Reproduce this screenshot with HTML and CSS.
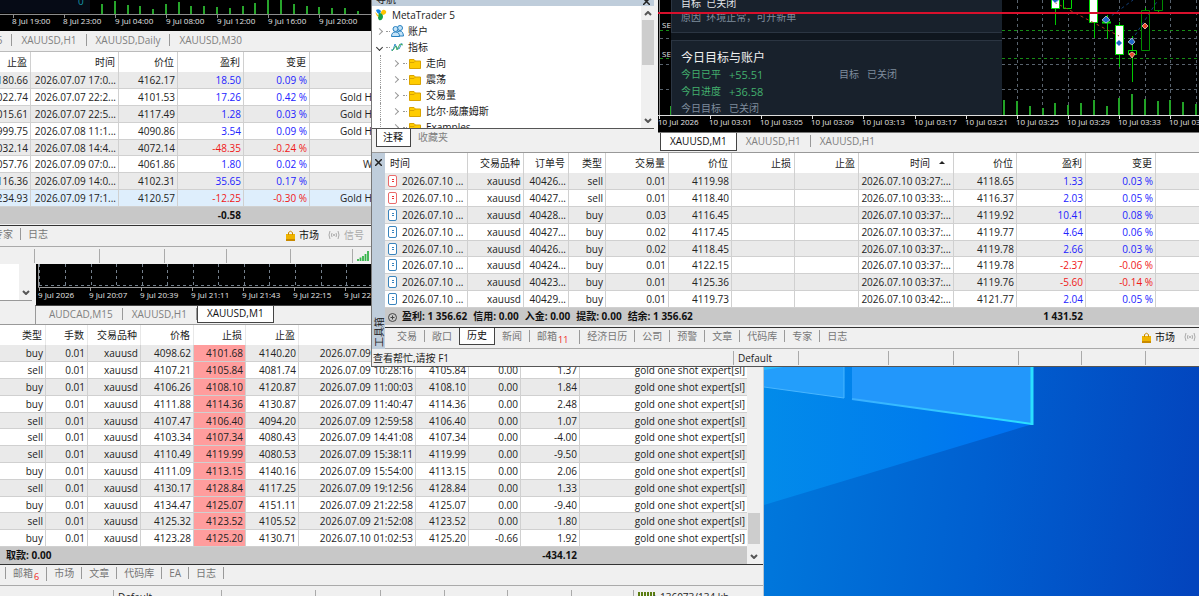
FILE: index.html
```html
<!DOCTYPE html>
<html lang="zh-CN">
<head>
<meta charset="utf-8">
<title>MetaTrader 5</title>
<link rel="stylesheet" href="styles.css">
</head>
<body>
<main class="desktop">
<svg class="wallpaper" viewBox="0 0 1199 596" preserveAspectRatio="xMaxYMax slice" aria-hidden="true">
  <defs>
    <linearGradient id="base" x1="764" y1="480" x2="1199" y2="530" gradientUnits="userSpaceOnUse"><stop offset="0" stop-color="#0078dc"/><stop offset=".5" stop-color="#005fd0"/><stop offset="1" stop-color="#0344bd"/></linearGradient>
    <linearGradient id="beam" x1="764" y1="0" x2="1033" y2="0" gradientUnits="userSpaceOnUse"><stop offset="0" stop-color="#028bea"/><stop offset=".6" stop-color="#007ced"/><stop offset="1" stop-color="#0070f4"/></linearGradient>
    <linearGradient id="edge" x1="852" y1="0" x2="1033" y2="0" gradientUnits="userSpaceOnUse"><stop offset="0" stop-color="#3aaeff"/><stop offset="1" stop-color="#2be0ff"/></linearGradient>
  </defs>
  <rect width="1199" height="596" fill="url(#base)"/>
  <path d="M700 300H1033V424L764 505L700 524Z" fill="url(#beam)"/>
  <path d="M700 360H844V398L764 387L700 378Z" fill="#239efb"/>
  <path d="M764 387L844 398V360" fill="none" stroke="#49b6ff" stroke-width="1"/>
  <path d="M764 366H790L764 370Z" fill="#2bbcfb"/>
  <path d="M852 360H1032V424L852 399Z" fill="#2297fb"/>
  <path d="M852 399L1032 424" fill="none" stroke="url(#edge)" stroke-width="2"/>
  <path d="M1032 360V425" stroke="#2be0ff" stroke-width="3"/>
</svg>

<section class="window win-history">
  <div class="chart-row">
    <div class="symbols"><div class="symbols-list"></div>
      <div class="sbar"><svg width="8" height="5" viewBox="0 0 8 5"><path d="M1 1L4 4L7 1" fill="none" stroke="#555" stroke-width="2"/></svg></div></div>
    <svg class="chart" height="41" viewBox="0 0 728 41" preserveAspectRatio="xMinYMin slice" role="img" aria-label="XAUUSD,M1">
      <rect width="728" height="42" fill="#000"/>
      <g stroke="#74808c" stroke-dasharray="3 3"><path d="M3.500 0V22M29.500 0V22M55.500 0V22M80.500 0V22M106.500 0V22M131.500 0V22M157.500 0V22M182.500 0V22M208.500 0V22M233.500 0V22M259.500 0V22M285.500 0V22M310.500 0V22M3 21.500H728"/></g>
      <path d="M2.500 0V23.500H728M3.500 23V27M54.500 23V27M105.500 23V27M156.500 23V27M207.500 23V27M258.500 23V27M309.500 23V27" fill="none" stroke="#999"/>
      <g class="axis"><text x="2" y="34">9 Jul 2026</text><text x="53" y="34">9 Jul 20:07</text><text x="104" y="34">9 Jul 20:39</text><text x="155" y="34">9 Jul 21:11</text><text x="206" y="34">9 Jul 21:43</text><text x="257" y="34">9 Jul 22:15</text><text x="308" y="34">9 Jul 22:47</text></g>
    </svg>
  </div>
  <nav class="tabs chart-tabs c-tabs"><button>AUDCAD,M15</button><button>XAUUSD,H1</button><button class="on">XAUUSD,M1</button></nav>
  <div class="table-row">
    <table class="grid deals">
      <colgroup><col class="w46"><col class="w42"><col class="w53"><col class="w53"><col class="w52"><col class="w53"><col class="w117"><col class="w53"><col class="w52"><col class="w59"><col></colgroup>
      <thead><tr><th>类型</th><th>手数</th><th>交易品种</th><th>价格</th><th>止损</th><th>止盈</th><th></th><th></th><th></th><th></th><th></th></tr></thead>
      <tbody>
      <tr><td>buy</td><td>0.01</td><td>xauusd</td><td>4098.62</td><td class="hit">4101.68</td><td>4140.20</td><td>2026.07.09 09:58:20</td><td></td><td></td><td></td><td></td></tr>
      <tr><td>sell</td><td>0.01</td><td>xauusd</td><td>4107.21</td><td class="hit">4105.84</td><td>4081.74</td><td>2026.07.09 10:28:16</td><td>4105.84</td><td>0.00</td><td>1.37</td><td>gold one shot expert[sl]</td></tr>
      <tr><td>buy</td><td>0.01</td><td>xauusd</td><td>4106.26</td><td class="hit">4108.10</td><td>4120.87</td><td>2026.07.09 11:00:03</td><td>4108.10</td><td>0.00</td><td>1.84</td><td>gold one shot expert[sl]</td></tr>
      <tr><td>buy</td><td>0.01</td><td>xauusd</td><td>4111.88</td><td class="hit">4114.36</td><td>4130.87</td><td>2026.07.09 11:40:47</td><td>4114.36</td><td>0.00</td><td>2.48</td><td>gold one shot expert[sl]</td></tr>
      <tr><td>sell</td><td>0.01</td><td>xauusd</td><td>4107.47</td><td class="hit">4106.40</td><td>4094.20</td><td>2026.07.09 12:59:58</td><td>4106.40</td><td>0.00</td><td>1.07</td><td>gold one shot expert[sl]</td></tr>
      <tr><td>sell</td><td>0.01</td><td>xauusd</td><td>4103.34</td><td class="hit">4107.34</td><td>4080.43</td><td>2026.07.09 14:41:08</td><td>4107.34</td><td>0.00</td><td>-4.00</td><td>gold one shot expert[sl]</td></tr>
      <tr><td>sell</td><td>0.01</td><td>xauusd</td><td>4110.49</td><td class="hit">4119.99</td><td>4080.53</td><td>2026.07.09 15:38:11</td><td>4119.99</td><td>0.00</td><td>-9.50</td><td>gold one shot expert[sl]</td></tr>
      <tr><td>buy</td><td>0.01</td><td>xauusd</td><td>4111.09</td><td class="hit">4113.15</td><td>4140.16</td><td>2026.07.09 15:54:00</td><td>4113.15</td><td>0.00</td><td>2.06</td><td>gold one shot expert[sl]</td></tr>
      <tr><td>sell</td><td>0.01</td><td>xauusd</td><td>4130.17</td><td class="hit">4128.84</td><td>4117.25</td><td>2026.07.09 19:12:56</td><td>4128.84</td><td>0.00</td><td>1.33</td><td>gold one shot expert[sl]</td></tr>
      <tr><td>buy</td><td>0.01</td><td>xauusd</td><td>4134.47</td><td class="hit">4125.07</td><td>4151.11</td><td>2026.07.09 21:22:58</td><td>4125.07</td><td>0.00</td><td>-9.40</td><td>gold one shot expert[sl]</td></tr>
      <tr><td>sell</td><td>0.01</td><td>xauusd</td><td>4125.32</td><td class="hit">4123.52</td><td>4105.52</td><td>2026.07.09 21:52:08</td><td>4123.52</td><td>0.00</td><td>1.80</td><td>gold one shot expert[sl]</td></tr>
      <tr><td>buy</td><td>0.01</td><td>xauusd</td><td>4123.28</td><td class="hit">4125.20</td><td>4130.71</td><td>2026.07.10 01:02:53</td><td>4125.20</td><td>-0.66</td><td>1.92</td><td>gold one shot expert[sl]</td></tr>
      </tbody>
      <tfoot><tr><td colspan="9" class="sum">取款: 0.00</td><td class="over">-434.12</td><td></td></tr></tfoot>
    </table>
    <div class="sbar long"><span class="thumb"></span><svg width="8" height="5" viewBox="0 0 8 5"><path d="M1 1L4 4L7 1" fill="none" stroke="#555" stroke-width="2"/></svg></div>
  </div>
  <nav class="tabs box-tabs first-sep"><button>邮箱<sub>6</sub></button><button>市场</button><button>文章</button><button>代码库</button><button>EA</button><button class="sep">日志</button></nav>
  <footer class="status c-status"><span></span><span>Default</span><span></span><span></span><span></span><span></span><span></span><span></span>
    <span class="mem"><svg width="18" height="10" viewBox="0 0 18 10"><path d="M1 0V10M4 0V10M7 0V10M10 0V10M13 0V10M16 0V10" stroke="#5b7d12" stroke-width="2"/><path d="M9 9L12 5L14 8L17 3" fill="none" stroke="#24445c" stroke-width="1"/></svg>136073/134 kb</span></footer>
</section>

<section class="window win-trade">
  <svg class="chart" height="31" viewBox="0 0 431 31" preserveAspectRatio="xMinYMin slice" role="img" aria-label="XAUUSD">
    <rect width="431" height="31" fill="#000"/>
    <rect width="150" height="13" fill="#060b16"/>
    <text x="138" y="5" class="zero">0</text>
    <path d="M162 14V4M175 14V1M188 14V5M200 14V6M213 14V9M226 14V4M239 14V2M251 14V6M264 14V6M277 14V7M290 14V8M303 14V6M315 14V3M328 14V0M341 14V0M354 14V4M367 14V6M379 14V7M392 14V8M405 14V8M418 14V11" stroke="#27a52b" stroke-width="2"/>
    <path d="M0 14.500H431M73.500 14V18M124.500 14V18M175.500 14V18M226.500 14V18M277.500 14V18M328.500 14V18M379.500 14V18" stroke="#8c8c8c"/>
    <g class="axis"><text x="72" y="24">8 Jul 19:00</text><text x="123" y="24">8 Jul 23:00</text><text x="175" y="24">9 Jul 04:00</text><text x="226" y="24">9 Jul 08:00</text><text x="277" y="24">9 Jul 12:00</text><text x="328" y="24">9 Jul 16:00</text><text x="379" y="24">9 Jul 20:00</text></g>
  </svg>
  <nav class="tabs chart-tabs a-tabs"><button>XAUUSD,M15</button><button>XAUUSD,H1</button><button>XAUUSD,Daily</button><button>XAUUSD,M30</button></nav>
  <table class="grid trades">
    <colgroup><col class="w91"><col class="w88"><col class="w59"><col class="w66"><col class="w66"><col></colgroup>
    <thead><tr><th>止盈</th><th>时间</th><th>价位</th><th>盈利</th><th>变更</th><th></th></tr></thead>
    <tbody>
    <tr><td>4180.66</td><td>2026.07.07 17:0...</td><td>4162.17</td><td class="up">18.50</td><td class="up">0.09 %</td><td class="note"></td></tr>
    <tr><td>4022.74</td><td>2026.07.07 22:2...</td><td>4101.53</td><td class="up">17.26</td><td class="up">0.42 %</td><td class="note">Gold H</td></tr>
    <tr><td>4015.61</td><td>2026.07.07 22:5...</td><td>4117.49</td><td class="up">1.28</td><td class="up">0.03 %</td><td class="note">Gold H</td></tr>
    <tr><td>3999.75</td><td>2026.07.08 11:1...</td><td>4090.86</td><td class="up">3.54</td><td class="up">0.09 %</td><td class="note">Gold H</td></tr>
    <tr><td>4032.14</td><td>2026.07.08 14:4...</td><td>4072.14</td><td class="down">-48.35</td><td class="down">-0.24 %</td><td class="note"></td></tr>
    <tr><td>4057.76</td><td>2026.07.09 07:0...</td><td>4061.86</td><td class="up">1.80</td><td class="up">0.02 %</td><td class="note late">W</td></tr>
    <tr><td>4116.36</td><td>2026.07.09 14:0...</td><td>4102.31</td><td class="up">35.65</td><td class="up">0.17 %</td><td class="note"></td></tr>
    <tr class="picked"><td>4234.93</td><td>2026.07.09 17:1...</td><td>4120.57</td><td class="down">-12.25</td><td class="down">-0.30 %</td><td class="note">Gold H</td></tr>
    </tbody>
    <tfoot><tr><td colspan="3"></td><td>-0.58</td><td colspan="2"></td></tr></tfoot>
  </table>
  <nav class="tabs box-tabs a-box"><button>专家</button><button>日志</button>
    <span class="services"><button class="strong"><svg width="9" height="11" viewBox="0 0 9 11"><path d="M0 4H9V11H0Z" fill="#efb400"/><path d="M0 9H9V11H0Z" fill="#c98a00"/><path d="M2.500 5V2.500Q4.500 0 6.500 2.500V5" fill="none" stroke="#c98a00"/></svg>市场</button><button class="faint"><svg width="12" height="8" viewBox="0 0 12 8"><path d="M2 0Q0 4 2 8M4 2Q3 4 4 6M10 0Q12 4 10 8M8 2Q9 4 8 6" fill="none" stroke="#aaa"/><circle cx="6" cy="4" r="1" fill="#aaa"/></svg>信号</button></span></nav>
  <footer class="status a-status"><span></span><span></span><span></span><span></span><span></span><span></span><span class="signal"><svg width="12" height="10" viewBox="0 0 12 10"><path d="M1 10V8M3.500 10V6.500M6 10V5M8.500 10V3M11 10V0" stroke="#35b44a" stroke-width="1.800"/></svg></span></footer>
</section>

<section class="window win-main">
  <div class="top">
    <aside class="navigator">
      <header><span>导航</span><button aria-label="关闭"><svg width="7" height="7" viewBox="0 0 7 7"><path d="M0 0L7 7M7 0L0 7" stroke="#222" stroke-width="1.500"/></svg></button></header>
      <div class="tree-box">
        <ul class="tree">
          <li><svg width="12" height="12" viewBox="0 0 12 12"><path d="M1 1Q4-1 6 2L5 5Q2 5 1 1Z" fill="#1688e8"/><path d="M6 3Q8-1 11 2Q12 5 8 6L6 5Z" fill="#ffc400"/><path d="M4 4Q8 4 8 8Q7 12 4 11Q2 9 4 4Z" fill="#17a34a"/><path d="M0 3Q3 5 4 8L2 7Z" fill="#ffc400"/></svg>MetaTrader 5</li>
          <li class="l1"><i class="closed"></i><b></b><svg width="13" height="12" viewBox="0 0 13 12"><g fill="#c5e3f7" stroke="#2580c0"><circle cx="9" cy="3" r="2.500"/><path d="M5 9Q6 6 9 6Q12 6 12.500 11H7"/><circle cx="4.500" cy="4" r="2.500"/><path d="M.5 11.500Q.5 7 4.500 7Q8.500 7 8.500 11.500Z"/></g></svg>账户</li>
          <li class="l1"><i class="open"></i><b></b><svg width="13" height="12" viewBox="0 0 13 12"><path d="M0 9H2L4 3L6 7L8 8L11 2" fill="none" stroke="#3a93cc"/><path d="M1 10L5 5L6 9L9 3L12 4" fill="none" stroke="#3cac62"/></svg>指标</li>
          <li class="l2"><i class="closed"></i><b></b><svg class="folder" width="12" height="11" viewBox="0 0 12 11"><path d="M.5 1.500H5L6.500 3H11.500V10.500H.5Z" fill="#fc0" stroke="#d9a300"/><path d="M.5 4.500H5L6.500 3" fill="none" stroke="#d9a300"/></svg>走向</li>
          <li class="l2"><i class="closed"></i><b></b><svg class="folder" width="12" height="11" viewBox="0 0 12 11"><path d="M.5 1.500H5L6.500 3H11.500V10.500H.5Z" fill="#fc0" stroke="#d9a300"/><path d="M.5 4.500H5L6.500 3" fill="none" stroke="#d9a300"/></svg>震荡</li>
          <li class="l2"><i class="closed"></i><b></b><svg class="folder" width="12" height="11" viewBox="0 0 12 11"><path d="M.5 1.500H5L6.500 3H11.500V10.500H.5Z" fill="#fc0" stroke="#d9a300"/><path d="M.5 4.500H5L6.500 3" fill="none" stroke="#d9a300"/></svg>交易量</li>
          <li class="l2"><i class="closed"></i><b></b><svg class="folder" width="12" height="11" viewBox="0 0 12 11"><path d="M.5 1.500H5L6.500 3H11.500V10.500H.5Z" fill="#fc0" stroke="#d9a300"/><path d="M.5 4.500H5L6.500 3" fill="none" stroke="#d9a300"/></svg>比尔·威廉姆斯</li>
          <li class="l2"><i class="closed"></i><b></b><svg class="folder" width="12" height="11" viewBox="0 0 12 11"><path d="M.5 1.500H5L6.500 3H11.500V10.500H.5Z" fill="#fc0" stroke="#d9a300"/><path d="M.5 4.500H5L6.500 3" fill="none" stroke="#d9a300"/></svg>Examples</li>
        </ul>
        <div class="sbar tree-bar"><svg width="8" height="5" viewBox="0 0 8 5"><path d="M1 4L4 1L7 4" fill="none" stroke="#555" stroke-width="2"/></svg><span class="thumb"></span><svg width="8" height="5" viewBox="0 0 8 5"><path d="M1 1L4 4L7 1" fill="none" stroke="#555" stroke-width="2"/></svg></div>
      </div>
      <nav class="tabs nav-tabs"><button class="on">注释</button><button>收藏夹</button></nav>
    </aside>
    <div class="chart-pane">
      <div class="chart-box">
        <svg class="chart" height="132" viewBox="0 0 542 132" preserveAspectRatio="xMinYMin slice" role="img" aria-label="XAUUSD,M1">
          <rect width="542" height="132" fill="#000"/>
          <g stroke="#59636e" stroke-dasharray="3 3" fill="none"><path d="M359.500 0V115M384.500 0V115M410.500 0V115M436.500 0V115M461.500 0V115M487.500 0V115M512.500 0V115M538.500 0V115M2 38.500H542M2 64.500H542M2 89.500H542"/></g>
          <path d="M2 30.500H542M2 58.500H542" stroke="#158c15" stroke-dasharray="3 3"/>
          <path d="M346 115V100M359 115V101M372 115V106M385 115V108M397 115V103M410 115V105M423 115V103M436 115V100M449 115V106M461 115V98M474 115V94M487 115V99M500 115V101M512 115V100M525 115V102M538 115V104M13 115V106" stroke="#22a326" stroke-width="2"/>
          <path d="M397.500 0V25M436.500 23V38M449.500 15V39M461.500 22V67M474.500 36V82M487.500 8V10M500.500 10V14" stroke="#00c800"/>
          <g stroke="#00dc00"><path d="M393.500-2H401.500V8.500H393.500Z" fill="#fff"/><path d="M405.500-2H413.500V8.500H405.500Z" fill="#000"/><path d="M431.500-2H439.500V22.500H431.500Z" fill="#fff"/><path d="M444 22.500H453" stroke-width="2"/><path d="M457.500 25.500H465.500V54.500H457.500Z" fill="#fff"/><path d="M470.500 50.500H478.500V54.500H470.500Z" fill="#000"/><path d="M483.500 10.500H491.500V50.500H483.500ZM496.500-2H504.500V10.500H496.500Z" fill="#000" stroke="#008a00"/></g>
          <path d="M396 2L461 36" stroke="#a43a1c" stroke-dasharray="3 3"/>
          <path d="M449 19L475 0M474 40L500 0" stroke="#123f78" stroke-dasharray="3 3"/>
          <g fill="#1d66c4" stroke="#b9c9dc" stroke-width=".8"><path d="M448 16L452 20L448 23L444 20Z"/><path d="M474 38L477 42L474 45L470 42Z"/><path d="M397-3L401 0L397 3L394 0Z"/></g>
          <path d="M461 40L464 43L461 46L458 43Z" fill="#1d66c4"/>
          <g fill="#e5482c" stroke="#ffc7b8" stroke-width=".8"><path d="M487 29L490 26L487 23L484 26Z"/><path d="M474 58L477 54L474 52L471 54Z"/></g>
          <path d="M1.500 0V115" stroke="#888"/>
          <path d="M0 115.500H542M1.500 115V119M52.500 115V119M103.500 115V119M154.500 115V119M205.500 115V119M257.500 115V119M308.500 115V119M359.500 115V119M410.500 115V119M461.500 115V119M512.500 115V119" stroke="#ddd"/>
          <g class="axis"><text x="4" y="28">SELL</text><text x="4" y="57">SELL</text><text x="0" y="125">10 Jul 2026</text><text x="51" y="125">10 Jul 03:01</text><text x="102" y="125">10 Jul 03:05</text><text x="153" y="125">10 Jul 03:09</text><text x="204" y="125">10 Jul 03:13</text><text x="256" y="125">10 Jul 03:17</text><text x="307" y="125">10 Jul 03:21</text><text x="358" y="125">10 Jul 03:25</text><text x="409" y="125">10 Jul 03:29</text><text x="460" y="125">10 Jul 03:33</text><text x="511" y="125">10 Jul 03:37</text></g>
        </svg>
        <div class="panel">
          <div class="card lead"><p class="bright">目标&nbsp; 已关闭</p><p>原因&nbsp; 环境正常，可开新单</p></div>
          <div class="card">
            <h2>今日目标与账户</h2>
            <dl><div class="gain"><dt>今日已平</dt><dd>+55.51</dd></div><div class="goal"><dt>目标</dt><dd>已关闭</dd></div></dl>
            <dl><div class="gain"><dt>今日进度</dt><dd>+36.58</dd></div></dl>
            <dl><div><dt>今日目标</dt><dd>已关闭</dd></div></dl>
          </div>
        </div>
        <span class="bid"></span>
      </div>
      <nav class="tabs chart-tabs b-tabs"><button class="on">XAUUSD,M1</button><button>XAUUSD,H1</button><button>XAUUSD,H1</button></nav>
    </div>
  </div>
  <div class="toolbox">
    <div class="gutter"><button aria-label="关闭"><svg width="7" height="7" viewBox="0 0 7 7"><path d="M0 0L7 7M7 0L0 7" stroke="#222" stroke-width="1.500"/></svg></button><span>工具箱</span></div>
    <div class="toolbox-body">
      <table class="grid history">
        <colgroup><col class="w83"><col class="w56"><col class="w45"><col class="w37"><col class="w63"><col class="w63"><col class="w63"><col class="w64"><col class="w95"><col class="w63"><col class="w69"><col class="w70"><col></colgroup>
        <thead><tr><th class="left">时间</th><th>交易品种</th><th>订单号</th><th>类型</th><th>交易量</th><th>价位</th><th>止损</th><th>止盈</th><th>时间<span class="sort"></span></th><th>价位</th><th>盈利</th><th>变更</th><th></th></tr></thead>
        <tbody>
        <tr><td class="left"><i class="doc red"></i>2026.07.10 ...</td><td>xauusd</td><td>40426...</td><td>sell</td><td>0.01</td><td>4119.98</td><td></td><td></td><td>2026.07.10 03:27:...</td><td>4118.65</td><td class="up">1.33</td><td class="up">0.03 %</td><td></td></tr>
        <tr><td class="left"><i class="doc red"></i>2026.07.10 ...</td><td>xauusd</td><td>40427...</td><td>sell</td><td>0.01</td><td>4118.40</td><td></td><td></td><td>2026.07.10 03:33:...</td><td>4116.37</td><td class="up">2.03</td><td class="up">0.05 %</td><td></td></tr>
        <tr><td class="left"><i class="doc"></i>2026.07.10 ...</td><td>xauusd</td><td>40428...</td><td>buy</td><td>0.03</td><td>4116.45</td><td></td><td></td><td>2026.07.10 03:37:...</td><td>4119.92</td><td class="up">10.41</td><td class="up">0.08 %</td><td></td></tr>
        <tr><td class="left"><i class="doc"></i>2026.07.10 ...</td><td>xauusd</td><td>40427...</td><td>buy</td><td>0.02</td><td>4117.45</td><td></td><td></td><td>2026.07.10 03:37:...</td><td>4119.77</td><td class="up">4.64</td><td class="up">0.06 %</td><td></td></tr>
        <tr><td class="left"><i class="doc"></i>2026.07.10 ...</td><td>xauusd</td><td>40426...</td><td>buy</td><td>0.02</td><td>4118.45</td><td></td><td></td><td>2026.07.10 03:37:...</td><td>4119.78</td><td class="up">2.66</td><td class="up">0.03 %</td><td></td></tr>
        <tr><td class="left"><i class="doc"></i>2026.07.10 ...</td><td>xauusd</td><td>40424...</td><td>buy</td><td>0.01</td><td>4122.15</td><td></td><td></td><td>2026.07.10 03:37:...</td><td>4119.78</td><td class="down">-2.37</td><td class="down">-0.06 %</td><td></td></tr>
        <tr><td class="left"><i class="doc"></i>2026.07.10 ...</td><td>xauusd</td><td>40423...</td><td>buy</td><td>0.01</td><td>4125.36</td><td></td><td></td><td>2026.07.10 03:37:...</td><td>4119.76</td><td class="down">-5.60</td><td class="down">-0.14 %</td><td></td></tr>
        <tr><td class="left"><i class="doc"></i>2026.07.10 ...</td><td>xauusd</td><td>40429...</td><td>buy</td><td>0.01</td><td>4119.73</td><td></td><td></td><td>2026.07.10 03:42:...</td><td>4121.77</td><td class="up">2.04</td><td class="up">0.05 %</td><td></td></tr>
        </tbody>
        <tfoot><tr><td colspan="9" class="left balance"><svg width="9" height="9" viewBox="0 0 9 9"><circle cx="4.500" cy="4.500" r="4" fill="none" stroke="#444"/><path d="M2.500 4.500H6.500M4.500 2.500V6.500" stroke="#444"/></svg><span>盈利: 1 356.62</span><span>信用: 0.00</span><span>入金: 0.00</span><span>提款: 0.00</span><span>结余: 1 356.62</span></td><td colspan="2" class="total">1 431.52</td><td colspan="2"></td></tr></tfoot>
      </table>
      <nav class="tabs box-tabs b-box"><button>交易</button><button>敞口</button><button class="on">历史</button><button>新闻</button><button class="wide">邮箱<sub>11</sub></button><button>经济日历</button><button>公司</button><button>预警</button><button>文章</button><button>代码库</button><button>专家</button><button>日志</button>
        <span class="services"><button class="strong"><svg width="9" height="11" viewBox="0 0 9 11"><path d="M0 4H9V11H0Z" fill="#efb400"/><path d="M0 9H9V11H0Z" fill="#c98a00"/><path d="M2.500 5V2.500Q4.500 0 6.500 2.500V5" fill="none" stroke="#c98a00"/></svg>市场</button><button class="faint" aria-label="信号"><svg width="12" height="8" viewBox="0 0 12 8"><path d="M2 0Q0 4 2 8M4 2Q3 4 4 6M10 0Q12 4 10 8M8 2Q9 4 8 6" fill="none" stroke="#aaa"/><circle cx="6" cy="4" r="1" fill="#aaa"/></svg></button></span></nav>
    </div>
  </div>
  <footer class="status b-status"><span>查看帮忙,请按 F1</span><span>Default</span><span></span><span></span><span></span><span></span><span></span><span></span></footer>
</section>
</main>
</body>
</html>
```
FILE: styles.css
```css
* { box-sizing: border-box; }
body { margin: 0; background: #0060d0; color: #222; font: 10px/14px "Open Sans", "Noto Sans CJK SC", sans-serif; }
button { margin: 0; padding: 0; border: 0; background: none; color: inherit; font: inherit; white-space: nowrap; }
svg { flex: none; }
h2, p, dl, dd, ul { margin: 0; padding: 0; }
.desktop { position: relative; height: 100vh; overflow: hidden; }
.wallpaper { position: absolute; inset: 0; width: 100%; height: 100%; }
.window { position: absolute; display: flex; flex-direction: column; background: #f0f0f0; overflow: hidden; }
.win-trade { left: -60px; top: 0; width: 431px; }
.win-history { left: 0; top: 264px; width: 764px; border-right: 1px solid #b8c4d0; }
.win-main { left: 371px; top: 0; right: 0; border-left: 1px solid #777; border-bottom: 1px solid #555; }

/* Charts */
.chart { display: block; width: 100%; }
.axis { fill: #e4e4e4; font-size: 8px; }
.zero { fill: #1397a8; font-size: 10px; }
.chart-row { display: flex; align-items: flex-start; }
.chart-row .chart { flex: 1; width: auto; min-width: 0; }
.symbols { display: flex; width: 32px; height: 37px; margin-right: 4px; border-bottom: 1px solid #999; }
.symbols-list { flex: 1; background: #fff; }

/* Scroll bars */
.sbar { display: flex; flex-direction: column; align-items: center; justify-content: flex-end; width: 13px; padding: 5px 0; background: #f0f0f0; }
.thumb { width: 12px; background: #cdcdcd; }
.long { gap: 10px; margin-right: 3px; }
.long .thumb { height: 31px; }
.tree-bar { gap: 4px; padding: 5px 0; }
.tree-bar .thumb { height: 45px; margin-bottom: auto; }

/* Tables */
.grid { width: 100%; table-layout: fixed; border-collapse: separate; border-spacing: 0; }
.grid th, .grid td { padding: 0 3px 0 0; text-align: right; white-space: nowrap; overflow: hidden; line-height: 14px; border-right: 1px solid #d0d0d0; }
.grid th { height: 20px; background: #fff; font-weight: 400; }
.grid td { height: 17px; padding-right: 2px; border-bottom: 1px solid #d0d0d0; background: #fff; }
.grid tbody tr:nth-child(5n) td { height: 16px; }
.grid tbody tr:nth-child(odd) td { background: #eaeaea; }
.grid tbody .picked td { background: #deeefc; }
.grid tfoot td { background: #c8c8c8; border-color: #c8c8c8; color: #111; font-weight: 700; }
.grid th:last-child, .grid td:last-child { border-right: 0; }
.grid .left { text-align: left; padding-left: 5px; }
.grid .up { color: #22f; }
.grid .down { color: #f01818; }
.trades { border-top: 1px solid #bbb; }
.grid .note { padding-left: 30px; text-align: left; }
.grid .late { padding-left: 53px; }
.deals { flex: 1; }
.deals th { border-color: #e8e8e8; }
.grid.deals tbody .hit { background: #ff9d9d; }
.grid.deals .sum { padding-left: 6px; text-align: left; }
.grid.deals .over { overflow: visible; }
.table-row { display: flex; border-top: 1px solid #999; }
.sort { display: inline-block; margin: 0 5px 3px 9px; border: 3px solid transparent; border-top: 0; border-bottom-color: #222; }
.doc { display: inline-block; width: 9px; height: 12px; margin: 1px 5px 0 -2px; border: 1px solid #3984bd; border-radius: 2px; background: linear-gradient(#3984bd, #3984bd) 3px 3px/2px 1px no-repeat, linear-gradient(#3984bd, #3984bd) 3px 5px/2px 1px no-repeat, #fff; vertical-align: top; }
.doc.red { border-color: #ea6b6b; background: linear-gradient(#e33, #e33) 3px 3px/2px 1px no-repeat, linear-gradient(#e33, #e33) 3px 5px/2px 1px no-repeat, #fff; }
.grid .balance { padding-left: 3px; }
.balance svg { margin-right: 5px; vertical-align: middle; }
.balance span { margin-right: 6px; }
.w37 { width: 37px; } .w42 { width: 42px; } .w45 { width: 45px; } .w46 { width: 46px; }
.w52 { width: 52px; } .w53 { width: 53px; } .w56 { width: 56px; } .w59 { width: 59px; }
.w63 { width: 63px; } .w64 { width: 64px; } .w66 { width: 66px; } .w69 { width: 69px; }
.w70 { width: 70px; } .w83 { width: 83px; } .w88 { width: 88px; } .w91 { width: 91px; }
.w95 { width: 95px; } .w117 { width: 117px; }

/* Tab strips */
.tabs { display: flex; align-items: flex-start; color: #808080; }
.tabs button { padding: 0 9px; border-right: 1px solid #999; line-height: 12px; }
.tabs .on { padding: 1px 9px 3px; border: 1px solid #444; border-top: 0; background: #fff; color: #111; }
.chart-tabs button:last-of-type { border-right: 0; }
.chart-tabs .on:last-of-type { border-right: 1px solid #444; }
.chart-tabs button { margin-top: 2px; }
.chart-tabs .on { margin-top: 0; }
.a-tabs { height: 20px; padding: 0 0 2px; align-items: center; }
.a-tabs button { margin: 0; }
.a-tabs button:first-child { padding-left: 0; }
.c-tabs { height: 19px; padding-left: 4px; margin-left: 35px; border-left: 1px solid #999; border-top: 1px solid #444; }
.b-tabs { height: 20px; padding-left: 2px; border-top: 1px solid #777; }
.b-tabs .on { padding: 2px 9px 3px; }
.box-tabs { height: 22px; border-top: 1px solid #333; border-bottom: 1px solid #aaa; color: #777; }
.box-tabs button { margin-top: 2px; padding: 0 7px; }
.box-tabs button:nth-last-of-type(1) { border-right: 0; }
.box-tabs .on { margin: 0 0 0 -1px; padding: 1px 7px 3px; }
.box-tabs .sep:last-of-type { border-right: 1px solid #999; }
.first-sep::before { content: ""; height: 12px; margin: 2px 0 0 5px; border-right: 1px solid #999; }
.box-tabs sub { color: #e22; font-size: 9px; line-height: 8px; vertical-align: -3px; margin-left: 1px; }
.box-tabs .wide { padding-right: 11px; }
.a-box { margin-top: 1px; padding-left: 46px; }
.b-box { height: 22px; margin-top: 2px; padding-left: 5px; }
.services { display: flex; gap: 9px; margin-left: auto; padding-right: 7px; }
.services button { display: flex; align-items: center; gap: 4px; padding: 0; border: 0; margin-top: 3px; }
.b-box .services { padding-right: 3px; }
.strong { color: #111; }
.faint { color: #aaa; }
.nav-tabs { height: 24px; padding-left: 4px; border-top: 1px solid #555; }
.nav-tabs button { margin-top: 0; padding: 2px 7px 3px; border-right: 0; }
.nav-tabs .on { border-right: 1px solid #444; padding: 2px 7px 3px 6px; }

/* Status bars */
.status { display: grid; height: 17px; align-items: center; padding: 1px 0; }
.status span { display: flex; align-items: center; height: 14px; padding-left: 4px; border-left: 1px solid #aaa; white-space: nowrap; }
.status span:first-child { border-left: 0; padding-left: 1px; }
.a-status { grid-template-columns: 94px 65px 65px 62px 64px 62px 1fr; }
.b-status { grid-template-columns: 361px 65px 90px 65px 65px 63px 64px 1fr; }
.c-status { grid-template-columns: 113px 108px 94px 65px 64px 63px 64px 62px 1fr; height: 20px; padding: 3px 0 1px; }
.status .mem { gap: 4px; }

/* Front window */
.top { display: grid; grid-template-columns: 282px 1fr; column-gap: 4px; border-bottom: 1px solid #999; }
.navigator { display: flex; flex-direction: column; }
.navigator header { display: flex; justify-content: space-between; align-items: flex-end; height: 6px; padding: 0 4px; background: #bfcddb; overflow: hidden; }
.navigator header button { height: 10px; line-height: 10px; }
.tree-box { display: flex; height: 122px; background: #fff; overflow: hidden; }
.tree { flex: 1; padding: 1px 0 0 3px; list-style: none; }
.tree li { display: flex; align-items: center; gap: 5px; height: 16px; line-height: 16px; }
.tree li.l1 { padding-left: 2px; gap: 4px; }
.tree li.l2 { padding-left: 18px; position: relative; }
.tree li.l2::before { content: ""; position: absolute; left: 5px; top: 0; height: 16px; border-left: 1px dotted #999; }
.tree b { width: 4px; margin-right: -3px; border-top: 1px dotted #999; }
.tree i { width: 5px; height: 5px; border: solid #999; border-width: 1px 1px 0 0; rotate: 45deg; }
.tree i.open { border-color: #333; rotate: 135deg; }
.chart-pane { min-width: 0; }
.chart-box { position: relative; overflow: hidden; }
.panel { position: absolute; left: 13px; top: 0; width: 331px; height: 115px; background: #0f161e; color: #7f8c9c; overflow: hidden; }
.card { height: 75px; padding: 8px 9px 0; border: 1px solid #2b3542; border-right: 0; border-bottom: 0; background: #18212c; }
.lead { height: 33px; margin-bottom: 7px; padding: 0 9px; border-top: 0; border-bottom: 1px solid #2b3542; }
.lead p { line-height: 14px; }
.lead .bright { height: 10px; line-height: 6px; }
.bright { color: #e0e4e8; }
.panel h2 { color: #f0f0f0; font: 400 12px/17px "Open Sans", "Noto Sans CJK SC", sans-serif; }
.panel dl { display: grid; grid-template-columns: 158px 1fr; line-height: 17px; }
.panel dl div { display: flex; gap: 8px; }
.gain { color: #43b06e; }
.gain dd { font-size: 11px; }
.bid { position: absolute; left: 0; right: 0; top: 12px; height: 2px; background: #d8102c; }
.toolbox { display: flex; }
.gutter { display: flex; flex-direction: column; align-items: center; justify-content: space-between; width: 13px; padding: 2px 0; background: #bfcddb; }
.gutter span { writing-mode: vertical-rl; text-orientation: sideways; rotate: 180deg; line-height: 12px; }
.toolbox-body { flex: 1; min-width: 0; }
```
